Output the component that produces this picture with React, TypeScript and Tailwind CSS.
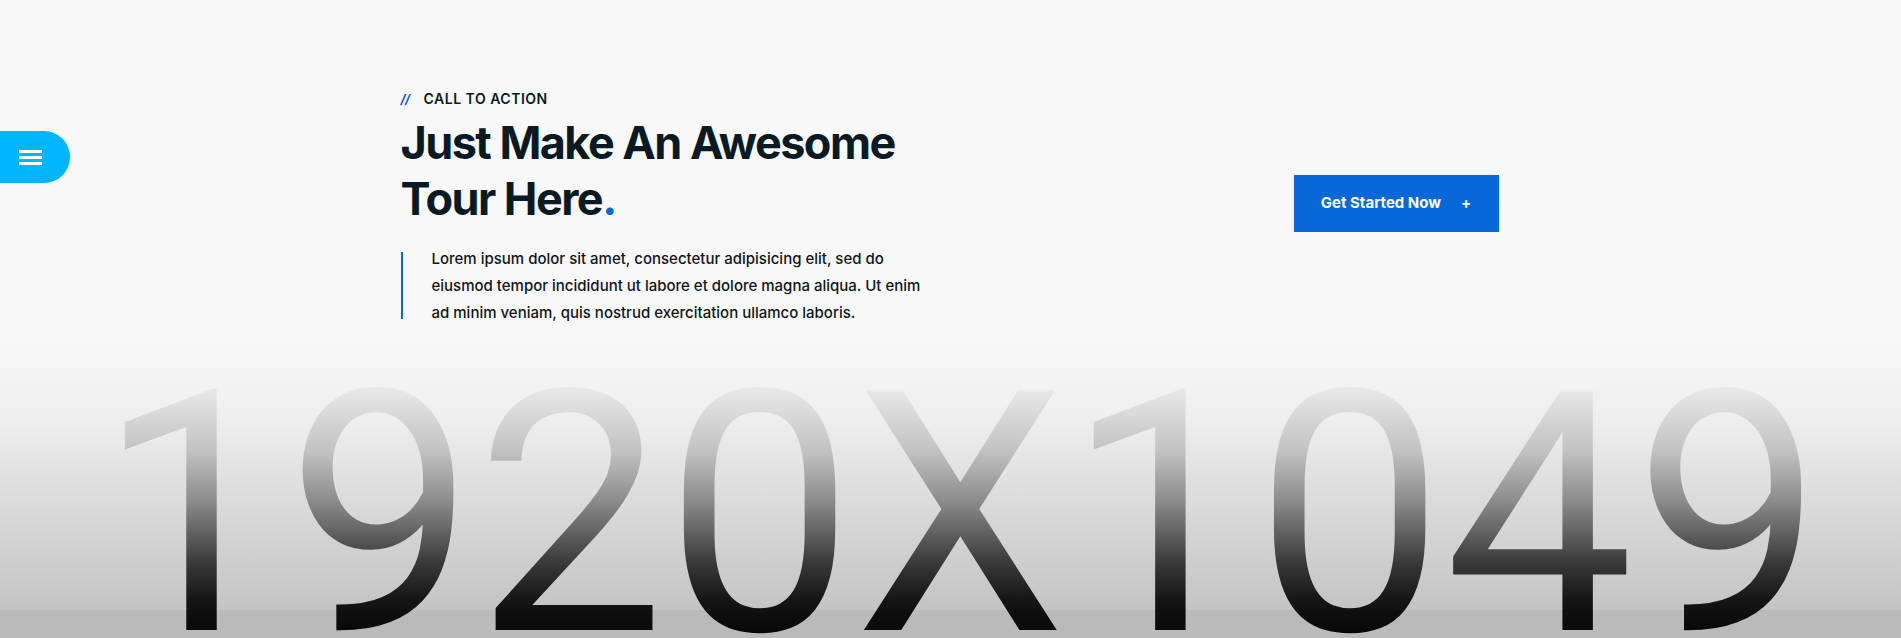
const MenuToggle = () => (
  <button
    aria-label="Open menu"
    className="absolute left-0 top-[131px] z-20 flex h-[52px] w-[70px] flex-col justify-center gap-[3px] rounded-r-full bg-[#00b4fe] pl-[19px]"
  >
    <span className="block h-[3px] w-[23px] bg-white" />
    <span className="block h-[3px] w-[23px] bg-white" />
    <span className="block h-[3px] w-[23px] bg-white" />
  </button>
);

const Backdrop = () => (
  <div className="absolute inset-0 overflow-hidden bg-[linear-gradient(180deg,#f8f8f8_0%,#f8f8f8_53%,#eeeeee_66%,#e0e0e0_75%,#d2d2d2_85%,#c4c4c4_95.6%)]">
    {/* placeholder image text sitting in the background */}
    <div className="absolute left-0 top-[346px] h-[292px] w-[1920px] overflow-hidden bg-[linear-gradient(180deg,#f4f4f4_0%,#e8e8e8_15%,#c2c2c2_36%,#8c8c8c_53%,#3a3a3a_74%,#151515_87%,#0a0a0a_97%,#000000_100%)] bg-clip-text text-center text-[337px] leading-none text-transparent [font-family:Roboto,sans-serif]">
      1920X1049
    </div>
    <div className="absolute bottom-0 left-0 h-[28px] w-full bg-black/[0.05]" />
  </div>
);

const App = () => {
  return (
    <section className="relative h-[638px] w-full overflow-hidden [font-family:Inter,'Noto_Sans',sans-serif]">
      <Backdrop />
      <MenuToggle />

      <div className="relative z-10 mx-auto flex w-[1100px] items-center justify-between pt-[89px]">
        <div className="w-[560px]">
          <div className="flex items-center text-[14px] leading-[20px] font-semibold text-[#0a1a24]">
            <span className="mr-[14px] text-[13px] font-bold italic tracking-[-0.5px] text-[#0b5fd6]">//</span>
            <span className="tracking-[0.5px]">CALL TO ACTION</span>
          </div>

          <h2 className="mt-[6px] text-[45px] leading-[56px] font-bold tracking-[-1.55px] text-[#0a1a24]">
            Just Make An Awesome
            <br />
            Tour Here<span className="text-[#0b66d9]">.</span>
          </h2>

          <div className="mt-[18px] flex items-start">
            <span className="mt-[7px] block h-[67px] w-[2px] shrink-0 bg-[#0b66d9]" />
            <p className="ml-[29px] text-[15px] leading-[27px] font-medium text-[#111418]">
              Lorem ipsum dolor sit amet, consectetur adipisicing elit, sed do
              <br />
              eiusmod tempor incididunt ut labore et dolore magna aliqua. Ut enim
              <br />
              ad minim veniam, quis nostrud exercitation ullamco laboris.
            </p>
          </div>
        </div>

        <button className="mr-[2px] mb-[8px] flex h-[57px] w-[205px] items-center justify-center gap-[20px] bg-[#0968d9] text-[15px] font-bold text-white">
          <span>Get Started Now</span>
          <span className="text-[15px]">+</span>
        </button>
      </div>
    </section>
  );
};

export default App;
